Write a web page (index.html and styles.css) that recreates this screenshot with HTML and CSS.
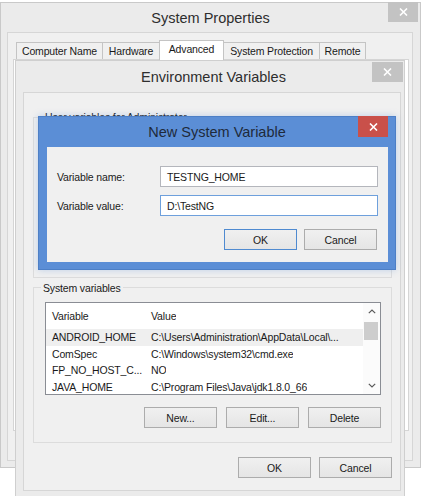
FILE: index.html
```html
<!DOCTYPE html>
<html>
<head>
<meta charset="utf-8">
<title>System Properties</title>
<link rel="stylesheet" href="styles.css">
</head>
<body>
<section class="win sys">
  <header class="titlebar sys-title">
    <span class="title">System Properties</span>
    <span class="close close-gray sys-close"><svg width="9" height="8" viewBox="0 0 9 8"><path d="M1 0.5L8 7.5M8 0.5L1 7.5" stroke="#fff" stroke-width="1.6"/></svg></span>
  </header>
  <div class="client sys-client">
    <div class="tabs">
      <span class="tab t1">Computer Name</span>
      <span class="tab t2">Hardware</span>
      <span class="tab t3 selected">Advanced</span>
      <span class="tab t4">System Protection</span>
      <span class="tab t5">Remote</span>
    </div>
    <div class="tabpanel"></div>
  </div>
</section>

<section class="win env">
  <header class="titlebar env-title">
    <span class="title">Environment Variables</span>
    <span class="close close-gray env-close"><svg width="9" height="8" viewBox="0 0 9 8"><path d="M1 0.5L8 7.5M8 0.5L1 7.5" stroke="#fff" stroke-width="1.6"/></svg></span>
  </header>
  <div class="client env-client">
    <div class="group user-group">
      <span class="group-label">User variables for Administrator</span>
    </div>
    <div class="group sys-group">
      <span class="group-label">System variables</span>
      <div class="list">
        <div class="rows">
          <div class="hdr"><span class="c1">Variable</span><span class="c2">Value</span></div>
          <div class="row sel"><span class="c1">ANDROID_HOME</span><span class="c2">C:\Users\Administration\AppData\Local\...</span></div>
          <div class="row"><span class="c1">ComSpec</span><span class="c2">C:\Windows\system32\cmd.exe</span></div>
          <div class="row"><span class="c1">FP_NO_HOST_C...</span><span class="c2">NO</span></div>
          <div class="row"><span class="c1">JAVA_HOME</span><span class="c2">C:\Program Files\Java\jdk1.8.0_66</span></div>
        </div>
        <div class="vscroll">
          <span class="arrow"><svg width="8" height="5" viewBox="0 0 8 5"><path d="M0.8 4.2L4 1L7.2 4.2" fill="none" stroke="#5a5a5a" stroke-width="1.2"/></svg></span>
          <span class="track"><span class="thumb"></span></span>
          <span class="arrow"><svg width="8" height="5" viewBox="0 0 8 5"><path d="M0.8 0.8L4 4L7.2 0.8" fill="none" stroke="#5a5a5a" stroke-width="1.2"/></svg></span>
        </div>
      </div>
      <div class="btnrow group-btns">
        <button class="btn">New...</button>
        <button class="btn">Edit...</button>
        <button class="btn">Delete</button>
      </div>
    </div>
    <div class="btnrow env-btns">
      <button class="btn">OK</button>
      <button class="btn">Cancel</button>
    </div>
  </div>
</section>

<section class="dialog">
  <header class="titlebar dlg-title">
    <span class="title">New System Variable</span>
    <span class="close close-red"><svg width="9" height="8" viewBox="0 0 9 8"><path d="M1 0.5L8 7.5M8 0.5L1 7.5" stroke="#fff" stroke-width="1.6"/></svg></span>
  </header>
  <div class="dlg-client">
    <div class="form">
      <label class="lbl">Variable name:</label>
      <div class="input">TESTNG_HOME</div>
      <label class="lbl">Variable value:</label>
      <div class="input focus">D:\TestNG</div>
    </div>
    <div class="btnrow dlg-btns">
      <button class="btn default">OK</button>
      <button class="btn">Cancel</button>
    </div>
  </div>
</section>
</body>
</html>
```

FILE: styles.css
```css
* { box-sizing: border-box; }
html, body { margin: 0; padding: 0; }
body {
  width: 425px;
  height: 496px;
  overflow: hidden;
  background: #ffffff;
  position: relative;
  font-family: "Liberation Sans", Arial, sans-serif;
  font-size: 10.5px;
  letter-spacing: -0.15px;
  color: #1a1a1a;
}

/* ---------- generic window ---------- */
.win {
  position: absolute;
  background: #ebebeb;
  border: 1px solid #c9c9c9;
  display: flex;
  flex-direction: column;
}
.titlebar {
  position: relative;
  flex: none;
  display: flex;
  align-items: center;
  justify-content: center;
}
.title {
  font-size: 14.5px;
  letter-spacing: 0;
  color: #2e2e2e;
}
.close {
  position: absolute;
  display: flex;
  align-items: center;
  justify-content: center;
}
.close-gray { background: #c3c3c3; }
.close-red { background: #c9504a; }
.client {
  background: #f0f0f0;
  border: 1px solid #d6d6d6;
}

/* ---------- System Properties ---------- */
.sys {
  left: 0;
  top: 2px;
  width: 421px;
  height: 466px;
}
.sys-title { height: 29px; }
.sys-close { top: -1px; right: 2px; width: 30px; height: 20px; }
.sys-client {
  margin: 0 7px 6px 6px;
  flex: 1;
  padding-top: 7px;
  display: flex;
  flex-direction: column;
}
.tabs {
  display: flex;
  align-items: flex-end;
  height: 19px;
  padding-left: 8px;
  position: relative;
  z-index: 1;
}
.tab {
  height: 17px;
  display: flex;
  align-items: center;
  justify-content: center;
  border: 1px solid #c4c4c4;
  border-bottom: none;
  background: #f0f0f0;
  margin-left: -1px;
  white-space: nowrap;
}
.tab:first-child { margin-left: 0; }
.tab.selected {
  height: 20px;
  margin-bottom: -1px;
  background: #ffffff;
  padding-bottom: 3px;
  border-color: #c4c4c4;
}
.t1 { width: 87px; }
.t2 { width: 58px; }
.t3 { width: 65px; }
.t4 { width: 97px; }
.t5 { width: 47px; }
.tabpanel {
  margin-left: 5px;
  width: 396px;
  height: 372px;
  background: #ffffff;
  border: 1px solid #d5d5d5;
}

/* ---------- Environment Variables ---------- */
.env {
  left: 15px;
  top: 60px;
  width: 390px;
  height: 445px;
  border-color: #cfcfcf;
}
.env-title { height: 31px; padding-left: 7px; }
.env-close { top: 1px; right: 1px; width: 31px; height: 20px; }
.env-client {
  margin-left: 7px;
  width: 378px;
  height: 399px;
  padding: 24px 8px 0 9px;
  display: flex;
  flex-direction: column;
}
.group {
  border: 1px solid #dcdcdc;
  display: flex;
  flex-direction: column;
}
.group-label {
  align-self: flex-start;
  line-height: 14px;
  padding: 0 2px;
  background: #f0f0f0;
  white-space: nowrap;
}
.user-group { height: 161px; }
.user-group .group-label { margin: -8px 0 0 9px; }
.sys-group {
  margin-top: 9px;
  height: 156px;
}
.sys-group .group-label { margin: -7px 0 0 7px; }

.list {
  margin: 7px 10px 0 11px;
  height: 93px;
  border: 1px solid #8a8d94;
  background: #ffffff;
  display: flex;
}
.rows {
  flex: 1;
  overflow: hidden;
}
.hdr {
  height: 26px;
  display: flex;
  align-items: center;
}
.row {
  height: 16.6px;
  display: flex;
  align-items: center;
}
.row.sel { background: #efefef; }
.c1 {
  width: 102px;
  flex: none;
  padding-left: 6px;
  white-space: nowrap;
  overflow: hidden;
}
.c2 {
  padding-left: 3px;
  white-space: nowrap;
  overflow: hidden;
}
.vscroll {
  width: 17px;
  flex: none;
  display: flex;
  flex-direction: column;
  background: #fbfbfb;
}
.arrow {
  height: 17px;
  flex: none;
  display: flex;
  align-items: center;
  justify-content: center;
}
.track {
  flex: 1;
  padding: 2px 2px 0 1px;
}
.thumb {
  display: block;
  height: 18px;
  background: #cdcdcd;
}

.btnrow {
  display: flex;
  justify-content: flex-end;
}
.btn {
  font: inherit;
  letter-spacing: inherit;
  color: #1a1a1a;
  width: 73px;
  height: 21px;
  padding: 0;
  border: 1px solid #acacac;
  background: linear-gradient(#f0f0f0, #e5e5e5);
  border-radius: 0;
}
.group-btns {
  margin-top: 12px;
  padding-right: 10px;
  gap: 9px;
}
.env-btns {
  margin-top: 14px;
  gap: 8px;
}

/* ---------- New System Variable dialog ---------- */
.dialog {
  position: absolute;
  left: 38px;
  top: 116px;
  width: 358px;
  height: 154px;
  background: #5b8ed6;
  border: 1px solid #4d7fc6;
  box-shadow: 0 0 7px rgba(91, 142, 214, 0.35);
  display: flex;
  flex-direction: column;
}
.dlg-title { height: 30px; }
.dlg-title .title { color: #1e2a3a; }
.close-red { top: -1px; right: 7px; width: 30px; height: 21px; }
.dlg-client {
  margin: 0 7px 0 8px;
  height: 115px;
  background: #f0f0f0;
  padding: 19px 0 0 10px;
}
.form {
  display: grid;
  grid-template-columns: 103px 218px;
  row-gap: 8px;
  align-items: center;
}
.input {
  height: 21px;
  border: 1px solid #b4b6bc;
  background: #ffffff;
  padding-left: 6px;
  display: flex;
  align-items: center;
  white-space: nowrap;
}
.input.focus { border-color: #6ea0dc; }
.dlg-btns {
  margin-top: 13px;
  width: 320px;
  gap: 7px;
}
.btn.default { border-color: #4f8ad0; }
```
